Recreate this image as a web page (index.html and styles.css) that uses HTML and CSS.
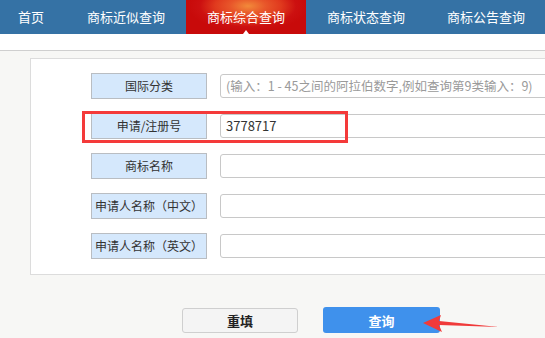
FILE: index.html
```html
<!DOCTYPE html>
<html lang="zh">
<head>
<meta charset="utf-8">
<link rel="stylesheet" href="styles.css">
</head>
<body>
<nav class="nav">
  <a class="nav-item first">首页</a>
  <a class="nav-item">商标近似查询</a>
  <a class="nav-item active">商标综合查询</a>
  <a class="nav-item">商标状态查询</a>
  <a class="nav-item">商标公告查询</a>
</nav>
<div class="gap-strip"></div>
<main class="content">
  <section class="panel">
    <div class="row">
      <label class="lbl">国际分类</label>
      <div class="inp placeholder">(输入：1 - 45之间的阿拉伯数字,例如查询第9类输入：9)</div>
    </div>
    <div class="row">
      <label class="lbl">申请/注册号</label>
      <div class="inp">3778717</div>
      <div class="highlight"></div>
    </div>
    <div class="row">
      <label class="lbl">商标名称</label>
      <div class="inp"></div>
    </div>
    <div class="row">
      <label class="lbl">申请人名称（中文）</label>
      <div class="inp"></div>
    </div>
    <div class="row">
      <label class="lbl">申请人名称（英文）</label>
      <div class="inp"></div>
    </div>
  </section>
  <div class="actions">
    <button class="btn reset">重填</button>
    <button class="btn query">查询</button>
    <svg class="arrow" width="90" height="24" viewBox="0 0 90 24">
      <polygon points="0,10 18,2 16,8 76,14 16,12 19,19" fill="#f03a3a"/>
    </svg>
  </div>
</main>
</body>
</html>
```
FILE: styles.css
```css
* { box-sizing: border-box; }
html, body { margin: 0; padding: 0; }
body {
  width: 545px;
  height: 338px;
  overflow: hidden;
  font-family: "Noto Sans CJK SC", "Noto Sans", sans-serif;
  background: #f7f7f5;
}
.nav {
  display: flex;
  height: 34px;
  background: #3572a5;
  overflow: hidden;
}
.nav-item {
  width: 120px;
  flex: none;
  color: #fff;
  font-size: 13px;
  line-height: 34px;
  text-align: center;
  position: relative;
}
.nav-item.first { width: 66px; text-align: center; padding-right: 4px; }
.nav-item.active {
  background:
    radial-gradient(ellipse 60px 26px at 62px 6px, #f28a3a 0%, #e8562a 30%, #e03a1e 55%, #cc1010 80%, #c80a0a 100%);
}
.nav-item.active::after {
  content: "";
  position: absolute;
  left: 57px;
  bottom: 0;
  border-left: 3px solid transparent;
  border-right: 3px solid transparent;
  border-bottom: 4px solid #fff;
}
.gap-strip {
  height: 17px;
  background: #fff;
  border-bottom: 1px solid #cfcfcf;
}
.content {
  padding: 7px 0 0 30px;
  overflow: hidden;
  height: 287px;
}
.panel {
  width: 560px;
  background: #fff;
  border: 1px solid #dcdcdc;
  padding: 14px 0 15px 0;
  display: flex;
  flex-direction: column;
  gap: 14px;
}
.row {
  position: relative;
  display: flex;
  align-items: center;
  height: 26px;
  padding-left: 60px;
  gap: 13px;
}
.lbl {
  width: 116px;
  height: 26px;
  flex: none;
  background: #d5e8fc;
  border: 1px solid #b9bdc2;
  font-size: 12px;
  color: #333;
  line-height: 24px;
  text-align: center;
  white-space: nowrap;
}
.inp {
  width: 340px;
  height: 24px;
  flex: none;
  border: 1px solid #c8c8c8;
  border-radius: 3px;
  font-size: 13px;
  line-height: 22px;
  padding-left: 5px;
  color: #333;
  white-space: nowrap;
  overflow: hidden;
}
.inp.placeholder { color: #9a9a9a; font-size: 12.5px; }
.highlight {
  position: absolute;
  left: 51px;
  top: -2px;
  width: 266px;
  height: 32px;
  border: 3px solid #f43a3a;
}
.actions {
  position: relative;
  display: flex;
  align-items: center;
  gap: 25px;
  padding: 32px 0 0 152px;
}
.btn {
  width: 116px;
  height: 26px;
  border-radius: 3px;
  font-family: inherit;
  font-size: 13px;
  font-weight: bold;
  padding: 0;
}
.btn.reset {
  height: 25px;
  background: #f4f4f4;
  border: 1px solid #cfcfcf;
  color: #222;
}
.btn.query {
  width: 117px;
  background: #3f91ec;
  border: none;
  color: #fff;
}
.arrow {
  position: absolute;
  left: 393px;
  top: 38px;
}
```
